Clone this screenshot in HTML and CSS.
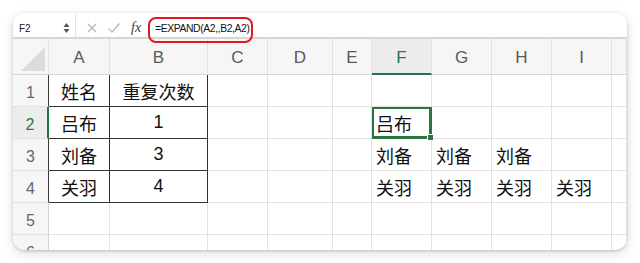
FILE: index.html
```html
<!DOCTYPE html>
<html lang="zh">
<head>
  <meta charset="UTF-8">
  <title>EXPAND</title>
  <link rel="stylesheet" href="styles.css">
</head>
<body>
  <div class="window">
    <div class="formula-bar">
      <div class="name-box">
        <span class="ref">F2</span>
        <span class="spin">
          <svg width="7" height="12" viewBox="0 0 7 12"><path d="M3.5 1 L6.5 5 H0.5 Z M3.5 11 L6.5 7 H0.5 Z" fill="#555"/></svg>
        </span>
      </div>
      <div class="tools">
        <svg width="12" height="12" viewBox="0 0 12 12"><path d="M2 2 L10 10 M10 2 L2 10" stroke="#b8b8b8" stroke-width="1.3" fill="none"/></svg>
        <svg width="14" height="12" viewBox="0 0 14 12"><path d="M1.5 6.5 L5 10 L12.5 1.5" stroke="#b8b8b8" stroke-width="1.3" fill="none"/></svg>
        <span class="fx">fx</span>
      </div>
      <div class="formula">=EXPAND(A2,,B2,A2)</div>
      <!-- marco rojo de la anotación -->
      <span class="mark"></span>
    </div>

    <div class="sheet">
      <div class="row head">
        <div class="corner"></div>
        <div class="col">A</div><div class="col">B</div><div class="col">C</div><div class="col">D</div>
        <div class="col">E</div><div class="col active">F</div><div class="col">G</div><div class="col">H</div>
        <div class="col">I</div><div class="col"></div>
      </div>
      <div class="row">
        <div class="num edge">1</div>
        <div class="cell t center">姓名</div><div class="cell t center">重复次数</div>
        <div class="cell"></div><div class="cell"></div><div class="cell"></div><div class="cell"></div>
        <div class="cell"></div><div class="cell"></div><div class="cell"></div><div class="cell"></div>
      </div>
      <div class="row">
        <div class="num active">2</div>
        <div class="cell t center">吕布</div><div class="cell t center">1</div>
        <div class="cell"></div><div class="cell"></div><div class="cell"></div><div class="cell selected">吕布</div>
        <div class="cell"></div><div class="cell"></div><div class="cell"></div><div class="cell"></div>
      </div>
      <div class="row">
        <div class="num edge">3</div>
        <div class="cell t center">刘备</div><div class="cell t center">3</div>
        <div class="cell"></div><div class="cell"></div><div class="cell"></div><div class="cell">刘备</div>
        <div class="cell">刘备</div><div class="cell">刘备</div><div class="cell"></div><div class="cell"></div>
      </div>
      <div class="row">
        <div class="num edge">4</div>
        <div class="cell t center">关羽</div><div class="cell t center">4</div>
        <div class="cell"></div><div class="cell"></div><div class="cell"></div><div class="cell">关羽</div>
        <div class="cell">关羽</div><div class="cell">关羽</div><div class="cell">关羽</div><div class="cell"></div>
      </div>
      <div class="row">
        <div class="num">5</div>
        <div class="cell"></div><div class="cell"></div><div class="cell"></div><div class="cell"></div><div class="cell"></div>
        <div class="cell"></div><div class="cell"></div><div class="cell"></div><div class="cell"></div><div class="cell"></div>
      </div>
      <div class="row">
        <div class="num">6</div>
        <div class="cell"></div><div class="cell"></div><div class="cell"></div><div class="cell"></div><div class="cell"></div>
        <div class="cell"></div><div class="cell"></div><div class="cell"></div><div class="cell"></div><div class="cell"></div>
      </div>
    </div>
  </div>
</body>
</html>
```

FILE: styles.css
```css
* {
  margin: 0;
  padding: 0;
  box-sizing: border-box;
}

body {
  background: #ffffff;
  font-family: 'Liberation Sans', Arial, sans-serif;
  width: 640px;
  height: 263px;
  overflow: hidden;
  padding: 13px 0 0 13px;
}

.window {
  width: 614px;
  height: 237px;
  background: #ffffff;
  border-radius: 12px;
  box-shadow: 0 1px 3px rgba(0, 0, 0, 0.18), 0 3px 12px rgba(0, 0, 0, 0.14);
  overflow: hidden;
}

/* Barra de fórmulas */
.formula-bar {
  position: relative;
  height: 26px;
  display: flex;
  align-items: stretch;
  border-bottom: 2px solid #d6d6d6;
  background: #ffffff;
}

.name-box {
  width: 63px;
  display: flex;
  align-items: center;
  justify-content: space-between;
  padding: 6px 5px 0 6px;
  border-right: 1px solid #e2e2e2;
}

.ref {
  font-size: 10px;
  color: #222;
}

.spin svg {
  display: block;
}

.tools {
  display: flex;
  align-items: center;
  gap: 9px;
  padding: 6px 0 0 10px;
  width: 72px;
}

.tools svg {
  display: block;
}

.fx {
  font-family: 'Liberation Serif', serif;
  font-style: italic;
  font-size: 14px;
  color: #444;
  margin-left: 1px;
}

.formula {
  display: flex;
  align-items: center;
  padding: 6px 0 0 7px;
  font-size: 10.4px;
  letter-spacing: -0.4px;
  color: #111;
}

.mark {
  position: absolute;
  left: 135px;
  top: 4px;
  width: 105px;
  height: 26px;
  border: 2px solid #e4161e;
  border-radius: 8px;
  z-index: 2;
}

/* Hoja */
.row {
  display: grid;
  grid-template-columns: 36px 61px 98px 60px 65px 39px 60px 60px 60px 60px 1fr;
  height: 32px;
}

.row.head {
  height: 36px;
}

.corner,
.col {
  background: #f6f6f6;
  border-right: 1px solid #e2e2e2;
  border-bottom: 1px solid #d4d4d4;
}

.corner {
  position: relative;
}

.corner::after {
  content: '';
  position: absolute;
  right: 3px;
  bottom: 3px;
  width: 24px;
  height: 24px;
  background: #dcdcdc;
  clip-path: polygon(100% 0, 100% 100%, 0 100%);
}

.col {
  display: flex;
  align-items: center;
  justify-content: center;
  font-size: 17px;
  color: #5a5a5a;
  padding-top: 3px;
}

.col.active {
  background: #ececec;
  color: #237b3f;
  border-bottom: 2px solid #237346;
}

.num {
  background: #f6f6f6;
  border-right: 1px solid #d4d4d4;
  border-bottom: 1px solid #e2e2e2;
  display: flex;
  align-items: center;
  justify-content: center;
  font-size: 16px;
  color: #666;
  padding-top: 4px;
}

.num.edge {
  border-right-color: #3a3a3a;
}

.num.active {
  background: #ececec;
  color: #237b3f;
  border-right: 2px solid #237346;
}

.cell {
  border-right: 1px solid #e2e2e2;
  border-bottom: 1px solid #e2e2e2;
  font-family: 'Liberation Sans', 'Noto Sans CJK SC', sans-serif;
  font-size: 18px;
  color: #111;
  display: flex;
  align-items: center;
  padding-left: 4px;
  white-space: nowrap;
}

.cell.t {
  border-right-color: #333;
  border-bottom-color: #333;
}

.cell.center {
  justify-content: center;
  padding-left: 0;
}

.cell.selected {
  position: relative;
  box-shadow: inset 0 0 0 2px #2d7444;
  border-color: #2d7444;
}

.cell.selected::after {
  content: '';
  position: absolute;
  right: -3px;
  bottom: -3px;
  width: 5px;
  height: 5px;
  background: #2d7444;
  border: 1px solid #ffffff;
}
```
